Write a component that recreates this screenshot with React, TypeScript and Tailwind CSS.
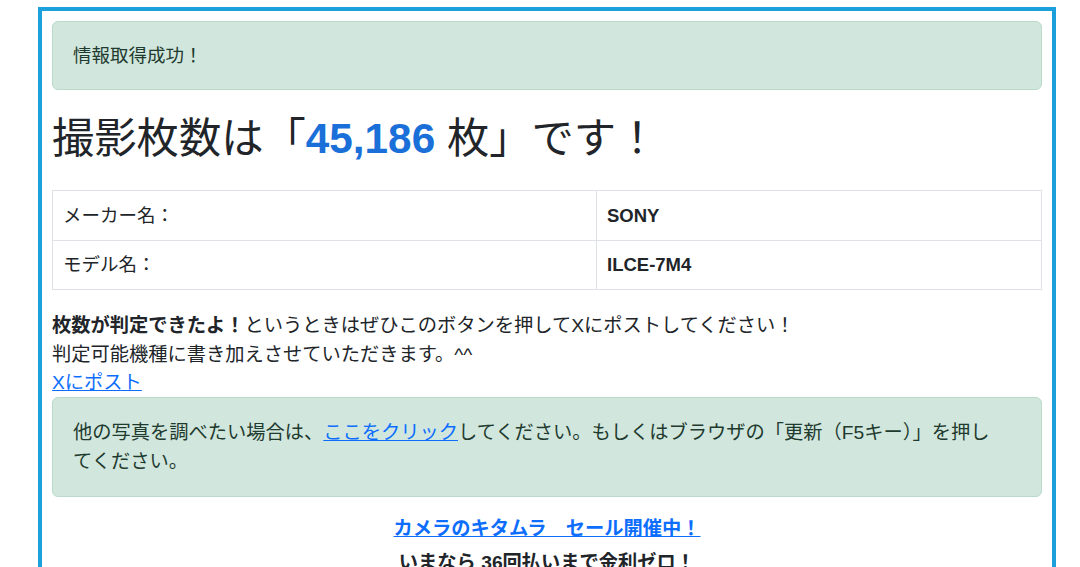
const font = { fontFamily: '"Liberation Sans", "Noto Sans CJK JP", sans-serif' };

export default function App() {
  return (
    <div className="min-h-[567px] bg-white text-[#212529]" style={font}>
      <div className="ml-[38px] mt-[7px] w-[1018px] border-4 border-[#1ca0dc] px-[10px] pt-[10px] pb-10">
        <div className="flex h-[69px] items-center rounded-[6px] border border-[#badbcc] bg-[#d1e7dd] px-[20px] text-[18.5px] text-[#1f3a2f]">
          情報取得成功！
        </div>

        <h1 className="mt-[24px] mb-[26px] text-[42.3px] leading-[50px] font-normal text-[#212529]">
          撮影枚数は「<span className="font-bold text-[#1a6fd8]">45,186</span> 枚」です！
        </h1>

        <table className="w-full border-collapse text-[18.5px]">
          <tbody>
            <tr className="h-[50px]">
              <td className="w-[544px] border border-[#dee2e6] px-[10px]">メーカー名：</td>
              <td className="border border-[#dee2e6] px-[10px] font-bold">SONY</td>
            </tr>
            <tr className="h-[49px]">
              <td className="w-[544px] border border-[#dee2e6] px-[10px]">モデル名：</td>
              <td className="border border-[#dee2e6] px-[10px] font-bold">ILCE-7M4</td>
            </tr>
          </tbody>
        </table>

        <div className="mt-[22px] text-[19.25px] leading-[28.5px]">
          <p>
            <b>枚数が判定できたよ！</b>というときはぜひこのボタンを押してXにポストしてください！
          </p>
          <p>判定可能機種に書き加えさせていただきます。^^</p>
          <a href="#" className="text-[#0d6efd] underline">
            Xにポスト
          </a>
        </div>

        <div className="-mt-px rounded-[6px] border border-[#badbcc] bg-[#d1e7dd] px-[20px] pt-[20px] pb-[20px] text-[19.25px] leading-[29px] text-[#1f3a2f]">
          他の写真を調べたい場合は、
          <a href="#" className="text-[#0d6efd] underline">
            ここをクリック
          </a>
          してください。もしくはブラウザの「更新（F5キー）」を押し
          <br />
          てください。
        </div>

        <div className="mt-[15px] text-center text-[19.25px] leading-[34px] font-bold">
          <a href="#" className="text-[#0d6efd] underline">
            カメラのキタムラ　セール開催中！
          </a>
          <p className="text-[#212529]">いまなら 36回払いまで金利ゼロ！</p>
        </div>
      </div>
    </div>
  );
}
